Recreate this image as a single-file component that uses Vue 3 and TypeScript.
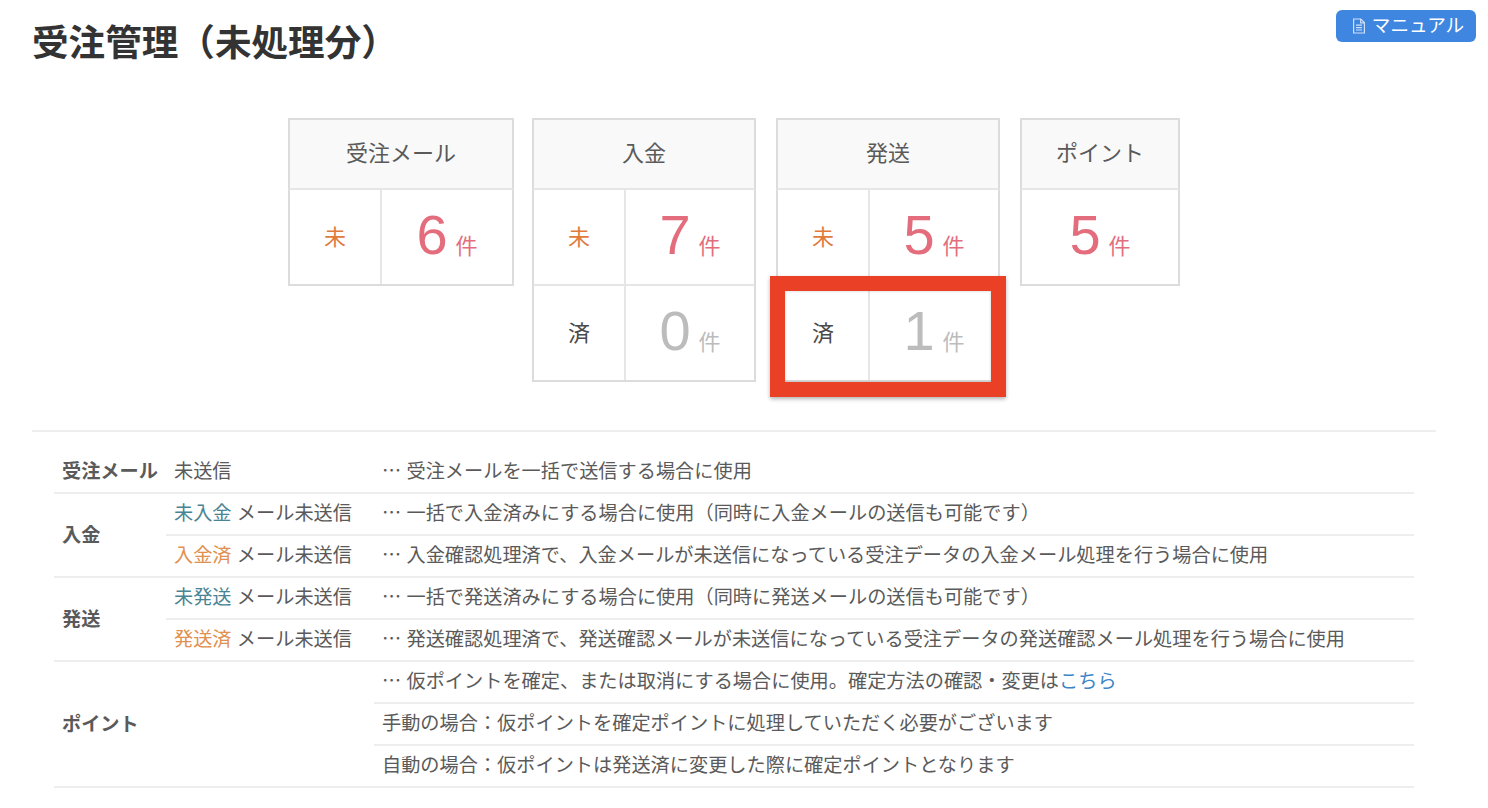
<script setup lang="ts">
interface Row {
  label: string
  labelClass: string
  count: number
  countClass: string
}
interface Card {
  title: string
  cls: string
  rows: Row[]
}
const pending = (count: number): Row => ({ label: '未', labelClass: 'pending', count, countClass: 'hot' })
const done = (count: number): Row => ({ label: '済', labelClass: '', count, countClass: 'cold' })

const cards: Card[] = [
  { title: '受注メール', cls: 'c-mail', rows: [pending(6)] },
  { title: '入金', cls: 'c-pay', rows: [pending(7), done(0)] },
  { title: '発送', cls: 'c-ship', rows: [pending(5), done(1)] },
]
</script>

<template>
  <div class="page">
    <header class="head">
      <h1 class="title">受注管理（未処理分）</h1>
      <a class="manual">
        <svg class="doc" width="14" height="16" viewBox="0 0 14 16" fill="none" stroke="currentColor" stroke-width="1.2">
          <path d="M1.6 1h7.2l3.6 3.6V15H1.6z" />
          <path d="M8.6 1v3.8h3.8" />
          <path d="M4 7.2h6M4 9.6h6M4 12h6" />
        </svg>
        <span class="manual-text">マニュアル</span>
      </a>
    </header>

    <section class="cards">
      <div v-for="card in cards" :key="card.title" class="card-wrap" :class="card.cls">
        <div class="card-title">{{ card.title }}</div>
        <div class="card-body">
          <div v-for="row in card.rows" :key="row.label" class="card-row">
            <div class="row-label" :class="row.labelClass">{{ row.label }}</div>
            <div class="row-count" :class="row.countClass">
              <span class="num">{{ row.count }}</span><span class="unit">件</span>
            </div>
          </div>
        </div>
        <div v-if="card.cls === 'c-ship'" class="highlight"></div>
      </div>
      <div class="card-wrap c-point">
        <div class="card-title">ポイント</div>
        <div class="card-body">
          <div class="card-row">
            <div class="row-count hot">
              <span class="num">5</span><span class="unit">件</span>
            </div>
          </div>
        </div>
      </div>
    </section>

    <hr class="rule" />

    <table class="guide">
      <colgroup>
        <col class="col-a" />
        <col class="col-b" />
        <col />
      </colgroup>
      <tbody>
        <tr>
          <th>受注メール</th>
          <td>未送信</td>
          <td>… 受注メールを一括で送信する場合に使用</td>
        </tr>
        <tr>
          <th rowspan="2">入金</th>
          <td><span class="teal">未入金</span> メール未送信</td>
          <td>… 一括で入金済みにする場合に使用（同時に入金メールの送信も可能です）</td>
        </tr>
        <tr>
          <td><span class="amber">入金済</span> メール未送信</td>
          <td>… 入金確認処理済で、入金メールが未送信になっている受注データの入金メール処理を行う場合に使用</td>
        </tr>
        <tr>
          <th rowspan="2">発送</th>
          <td><span class="teal">未発送</span> メール未送信</td>
          <td>… 一括で発送済みにする場合に使用（同時に発送メールの送信も可能です）</td>
        </tr>
        <tr>
          <td><span class="amber">発送済</span> メール未送信</td>
          <td>… 発送確認処理済で、発送確認メールが未送信になっている受注データの発送確認メール処理を行う場合に使用</td>
        </tr>
        <tr>
          <th rowspan="3" colspan="2">ポイント</th>
          <td>… 仮ポイントを確定、または取消にする場合に使用。確定方法の確認・変更は<a class="link">こちら</a></td>
        </tr>
        <tr>
          <td>手動の場合：仮ポイントを確定ポイントに処理していただく必要がございます</td>
        </tr>
        <tr>
          <td>自動の場合：仮ポイントは発送済に変更した際に確定ポイントとなります</td>
        </tr>
      </tbody>
    </table>
  </div>
</template>

<style scoped>
.page {
  width: 1488px;
  height: 808px;
  overflow: hidden;
  box-sizing: border-box;
  padding: 10px 12px 0 32px;
  background: #fff;
  color: #5a5a5a;
  font-family: "Noto Sans CJK JP", "Liberation Sans", sans-serif;
}
.head {
  display: flex;
  justify-content: space-between;
  align-items: flex-start;
  height: 108px;
}
.title {
  margin: 6px 0 0;
  font-size: 36.6px;
  line-height: 50px;
  font-weight: 700;
  color: #333;
}
.manual {
  display: flex;
  align-items: center;
  justify-content: center;
  gap: 6px;
  width: 140px;
  height: 32px;
  box-sizing: border-box;
  padding-left: 4px;
  border-radius: 6px;
  background: #3f86e0;
  color: #fff;
  font-size: 18.6px;
}
.manual-text {
  margin-bottom: 4px;
  line-height: 28px;
}
.doc {
  color: #cfe0f6;
  flex: none;
}
.cards {
  width: 1404px;
  height: 312px;
  display: flex;
  justify-content: center;
  align-items: flex-start;
  gap: 20px;
}
.card-wrap {
  position: relative;
  box-sizing: border-box;
  width: 224px;
}
.c-mail {
  width: 226px;
  margin-right: -2px;
}
.c-point {
  width: 160px;
}
.card-title {
  box-sizing: border-box;
  height: 72px;
  border: 2px solid #dcdcdc;
  border-bottom: 2px solid #e6e6e6;
  background: #f9f9f9;
  font-size: 22px;
  line-height: 62px;
  text-align: center;
}
.card-body {
  border: 2px solid #dcdcdc;
  border-top: 0;
}
.card-row {
  display: flex;
  height: 94px;
}
.card-row + .card-row {
  border-top: 2px solid #e6e6e6;
}
.row-label {
  flex: none;
  width: 90px;
  border-right: 2px solid #e6e6e6;
  font-size: 22px;
  line-height: 90px;
  text-align: center;
  color: #4a4a4a;
}
.row-label.pending {
  color: #e07b3c;
}
.row-count {
  flex: 1;
  display: flex;
  justify-content: center;
  align-items: baseline;
  line-height: 90px;
}
.num {
  font-family: "Liberation Sans", sans-serif;
  font-size: 56px;
}
.unit {
  margin-left: 8px;
  font-size: 22px;
}
.hot {
  color: #e46d7d;
}
.cold {
  color: #bcbcbc;
}
.highlight {
  position: absolute;
  left: -6px;
  top: 158px;
  width: 236px;
  height: 121px;
  box-sizing: border-box;
  border: 15px solid #ea4025;
  box-shadow: 0 2px 4px rgba(0, 0, 0, 0.3), inset 0 0 3px rgba(0, 0, 0, 0.2);
}
.rule {
  width: 1404px;
  height: 2px;
  margin: 0 0 20px;
  border: 0;
  background: #eee;
}
.guide {
  width: 1360px;
  margin-left: 22px;
  border-collapse: separate;
  border-spacing: 0;
  table-layout: fixed;
  font-size: 19.2px;
  word-spacing: 1px;
}
.col-a {
  width: 112px;
}
.col-b {
  width: 208px;
}
.guide th,
.guide td {
  box-sizing: border-box;
  height: 42px;
  padding: 0 8px 4px;
  border-bottom: 2px solid #eee;
  line-height: 36px;
  text-align: left;
  white-space: nowrap;
}
.guide th {
  font-weight: 700;
}
.guide th[rowspan] {
  padding-bottom: 2px;
}
.teal {
  color: #4a8494;
}
.amber {
  color: #e09050;
}
.link {
  color: #3b85c8;
}
</style>

<style>
html,
body {
  margin: 0;
  background: #fff;
}
</style>
